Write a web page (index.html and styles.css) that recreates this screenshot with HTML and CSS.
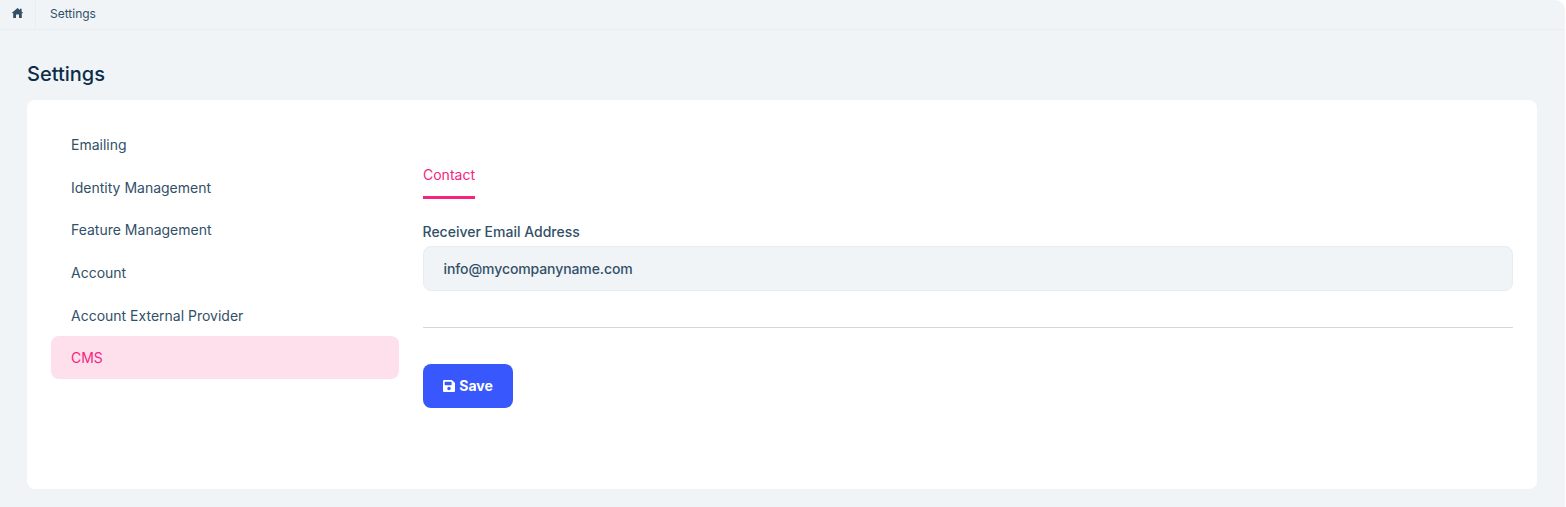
FILE: index.html
```html
<!DOCTYPE html>
<html lang="en">
<head>
<meta charset="utf-8">
<title>Settings</title>
<link rel="stylesheet" href="styles.css">
</head>
<body>
<div class="app">
  <nav class="crumbs">
    <a class="crumb-home" href="#" aria-label="Home">
      <svg class="home-icon" viewBox="0 0 11 10"><path fill="currentColor" d="M5.5 0L8 2.1V.8h1.6v2.7L11 4.8l-.5.6-.7-.6V10H7V6.6H4V10H1.2V4.8l-.7.6L0 4.8z"/></svg>
    </a>
    <span class="crumb-text">Settings</span>
  </nav>
  <main class="content">
    <h1 class="page-title">Settings</h1>
    <section class="card">
      <ul class="side-nav">
        <li class="side-item">Emailing</li>
        <li class="side-item">Identity Management</li>
        <li class="side-item">Feature Management</li>
        <li class="side-item">Account</li>
        <li class="side-item">Account External Provider</li>
        <li class="side-item side-item-active">CMS</li>
      </ul>
      <div class="panel">
        <div class="tabs"><span class="tab">Contact</span></div>
        <label class="field-label" for="email">Receiver Email Address</label>
        <input class="field-input" id="email" type="text" value="info@mycompanyname.com">
        <hr class="rule">
        <button class="save-btn" type="button">
          <svg class="save-icon" viewBox="0 0 448 448"><path fill="currentColor" d="M433.941 97.941l-83.882-83.882A48 48 0 0 0 316.118 0H48C21.49 0 0 21.49 0 48v352c0 26.51 21.49 48 48 48h352c26.51 0 48-21.49 48-48V131.882a48 48 0 0 0-14.059-33.941zM224 384c-35.346 0-64-28.654-64-64 0-35.346 28.654-64 64-64s64 28.654 64 64c0 35.346-28.654 64-64 64zm96-304.52V180c0 6.627-5.373 12-12 12H76c-6.627 0-12-5.373-12-12V76c0-6.627 5.373-12 12-12h228.52c3.183 0 6.235 1.264 8.485 3.515l3.48 3.48A11.996 11.996 0 0 1 320 79.48z"/></svg>
          <span class="save-label">Save</span>
        </button>
      </div>
    </section>
  </main>
</div>
</body>
</html>
```
FILE: styles.css
```css
* { box-sizing: border-box; }
html, body { margin: 0; height: 100%; background: #fff; }
body {
  font-family: Inter, "Liberation Sans", sans-serif;
  color: #325068;
  overflow: hidden;
}
.app {
  width: 1565px;
  height: 507px;
  background: #f0f4f7;
  border-top-right-radius: 10px;
  display: flex;
  flex-direction: column;
}
.crumbs {
  height: 30px;
  display: flex;
  align-items: center;
  border-bottom: 1px solid #e8edf2;
}
.crumb-home {
  width: 36px;
  height: 29px;
  display: flex;
  align-items: center;
  padding: 0 0 3px 12px;
  border-right: 1px solid #e8edf2;
  color: #325068;
}
.home-icon { width: 11px; height: 10px; display: block; }
.crumb-text { margin: 0 0 2px 14px; font-size: 12px; line-height: 16px; }
.content { padding: 0 28px 18px 27px; flex: 1; display: flex; flex-direction: column; }
.page-title {
  margin: 32px 0 13px;
  height: 25px;
  font-size: 20px;
  line-height: 25px;
  font-weight: 500;
  color: #0b2d4a;
}
.card {
  flex: 1;
  background: #fff;
  border-radius: 8px;
  padding: 23px 24px 0;
  display: flex;
  gap: 24px;
}
.side-nav { list-style: none; margin: 0; padding: 0; width: 348px; flex: none; }
.side-item {
  height: 42.7px;
  padding: 0 20px;
  display: flex;
  align-items: center;
  font-size: 14px;
  border-radius: 8px;
}
.side-item-active { background: #fde0ec; color: #f5247f; }
.panel { flex: 1; min-width: 0; display: flex; flex-direction: column; align-items: flex-start; padding-top: 38px; }
.tabs { height: 38px; }
.tab {
  display: block;
  height: 38px;
  line-height: 21px;
  font-size: 14px;
  padding-top: 3px;
  color: #f5247f;
  border-bottom: 3px solid #f5247f;
}
.field-label {
  margin-top: 24px;
  margin-left: -0.5px;
  font-size: 14px;
  line-height: 17px;
  font-weight: 500;
}
.field-input {
  margin-top: 6px;
  width: 100%;
  height: 45px;
  padding: 0 19.5px;
  font: 500 14px Inter, "Liberation Sans", sans-serif;
  letter-spacing: -0.1px;
  color: #325068;
  background: #f0f4f7;
  border: 1px solid #e8edf2;
  border-radius: 8px;
  outline: none;
}
.rule { width: 100%; margin: 36px 0 0; border: 0; border-top: 1px solid #d4d6d9; }
.save-btn {
  margin-top: 36px;
  width: 90px;
  height: 44px;
  background: #3858fe;
  color: #fff;
  border: 0;
  border-radius: 8px;
  font: 700 14px Inter, "Liberation Sans", sans-serif;
  letter-spacing: -0.05px;
  display: flex;
  align-items: center;
  justify-content: center;
  gap: 4px;
  padding: 0;
}
.save-label { margin-bottom: 1px; }
.save-icon { width: 12px; height: 12px; display: block; }
```
